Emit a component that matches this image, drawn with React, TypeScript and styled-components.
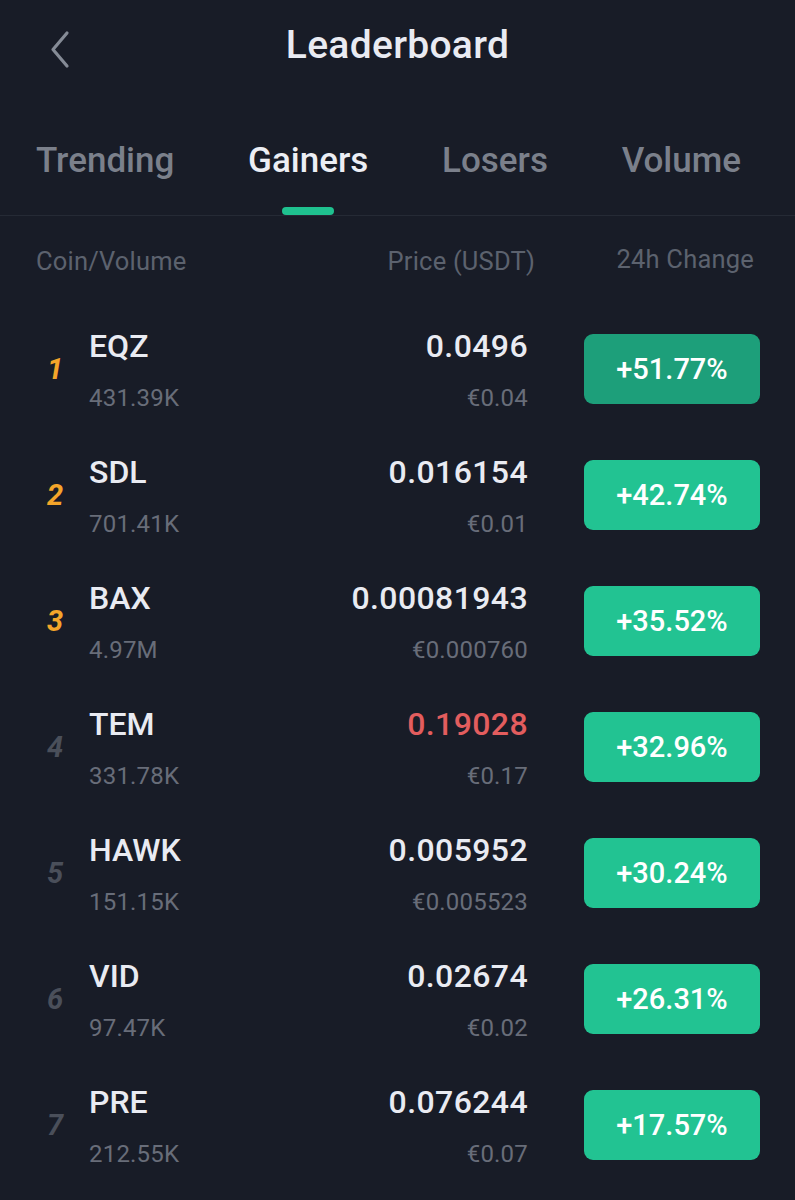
import React from 'react';
import styled, { createGlobalStyle } from 'styled-components';

type Coin = {
    symbol: string
    volume: string
    price: string
    fiat: string
    change: string
    down?: boolean
}

const coins: Coin[] = [
    { symbol: 'EQZ', volume: '431.39K', price: '0.0496', fiat: '€0.04', change: '+51.77%' },
    { symbol: 'SDL', volume: '701.41K', price: '0.016154', fiat: '€0.01', change: '+42.74%' },
    { symbol: 'BAX', volume: '4.97M', price: '0.00081943', fiat: '€0.000760', change: '+35.52%' },
    { symbol: 'TEM', volume: '331.78K', price: '0.19028', fiat: '€0.17', change: '+32.96%', down: true },
    { symbol: 'HAWK', volume: '151.15K', price: '0.005952', fiat: '€0.005523', change: '+30.24%' },
    { symbol: 'VID', volume: '97.47K', price: '0.02674', fiat: '€0.02', change: '+26.31%' },
    { symbol: 'PRE', volume: '212.55K', price: '0.076244', fiat: '€0.07', change: '+17.57%' },
];

const tabs = ['Trending', 'Gainers', 'Losers', 'Volume'];

const GlobalStyle = createGlobalStyle`
  body {
    margin: 0;
    background: #181c27;
    font-family: Roboto, "Liberation Sans", sans-serif;
  }
`

export default function App() {
    return (
        <Page>
            <GlobalStyle/>
            <Header>
                <Back aria-label="back">
                    <svg width="24" height="40" viewBox="0 0 24 40" fill="none">
                        <path d="M19 4 L5 20.5 L19 37" stroke="#858b96" strokeWidth="3.2" strokeLinecap="round" strokeLinejoin="round"/>
                    </svg>
                </Back>
                <Title>Leaderboard</Title>
            </Header>

            <TabBar>
                {tabs.map(t => (
                    <Tab key={t}>
                        <TabLabel $active={t === 'Gainers'}>{t}</TabLabel>
                        <Indicator $active={t === 'Gainers'}/>
                    </Tab>
                ))}
            </TabBar>

            <ColumnHead>
                <HeadLabel>Coin/Volume</HeadLabel>
                <HeadLabel>Price (USDT)</HeadLabel>
                <HeadChange>24h Change</HeadChange>
            </ColumnHead>

            {coins.map((c, i) => (
                <Row key={c.symbol}>
                    <Rank $top={i < 3}>{i + 1}</Rank>
                    <CoinCell>
                        <Symbol>{c.symbol}</Symbol>
                        <Sub>{c.volume}</Sub>
                    </CoinCell>
                    <PriceCell>
                        <Price $down={c.down}>{c.price}</Price>
                        <Sub>{c.fiat}</Sub>
                    </PriceCell>
                    <Change $pressed={i === 0}>{c.change}</Change>
                </Row>
            ))}
        </Page>
    );
}

const Page = styled.div`
  width: 795px;
  min-height: 1200px;
  background: #181c27;
  color: #e9ebf2;
`
const Header = styled.div`
  position: relative;
  height: 90px;
  display: flex;
  align-items: center;
  justify-content: center;
`
const Back = styled.div`
  position: absolute;
  left: 48px;
  top: 29px;
  width: 24px;
  height: 40px;
`
const Title = styled.h1`
  margin: 0;
  font-size: 39px;
  font-weight: 500;
  color: #e9ebf2;
  letter-spacing: 0.3px;
`
const TabBar = styled.div`
  display: flex;
  justify-content: space-between;
  padding: 51px 54px 0 36px;
  border-bottom: 1px solid #252a35;
`
const Tab = styled.div`
  display: flex;
  flex-direction: column;
  align-items: center;
`
const TabLabel = styled.div<{ $active?: boolean }>`
  font-size: 35px;
  line-height: 40px;
  font-weight: 500;
  color: ${p => p.$active ? '#eceef4' : '#7b808b'};
  margin-bottom: 26px;
`
const Indicator = styled.div<{ $active?: boolean }>`
  width: 52px;
  height: 8px;
  border-radius: 4px;
  background: ${p => p.$active ? '#1fc18f' : 'transparent'};
`
const ColumnHead = styled.div`
  height: 90px;
  display: grid;
  grid-template-columns: 1fr auto 219px;
  align-items: center;
  padding: 0 41px 0 36px;
  font-size: 25.5px;
  letter-spacing: 0.2px;
  color: #5c626e;
`
const HeadLabel = styled.div``
const HeadChange = styled.div`
  text-align: right;
  margin-top: -4px;
`
const Row = styled.div`
  height: 126px;
  display: flex;
  align-items: center;
  padding: 0 35px 0 47px;
`
const Rank = styled.div<{ $top?: boolean }>`
  width: 42px;
  font-size: 29px;
  font-weight: 700;
  font-style: italic;
  color: ${p => p.$top ? '#f4a52a' : '#4a4f5a'};
`
const CoinCell = styled.div`
  flex: 1;
  display: flex;
  flex-direction: column;
  gap: 17px;
`
const PriceCell = styled.div`
  display: flex;
  flex-direction: column;
  align-items: flex-end;
  gap: 17px;
  margin-right: 56px;
`
const Symbol = styled.div`
  font-size: 32px;
  line-height: 40px;
  font-weight: 500;
  color: #e9ebf2;
`
const Price = styled.div<{ $down?: boolean }>`
  font-size: 32px;
  line-height: 40px;
  font-weight: 500;
  letter-spacing: 0.4px;
  color: ${p => p.$down ? '#e35d5e' : '#e9ebf2'};
`
const Sub = styled.div`
  font-size: 24px;
  line-height: 30px;
  letter-spacing: 0.2px;
  color: #686d79;
`
const Change = styled.div<{ $pressed?: boolean }>`
  width: 176px;
  height: 70px;
  border-radius: 9px;
  display: flex;
  align-items: center;
  justify-content: center;
  font-size: 29px;
  font-weight: 500;
  color: #ffffff;
  background: ${p => p.$pressed ? '#1d9f7a' : '#22c392'};
`
